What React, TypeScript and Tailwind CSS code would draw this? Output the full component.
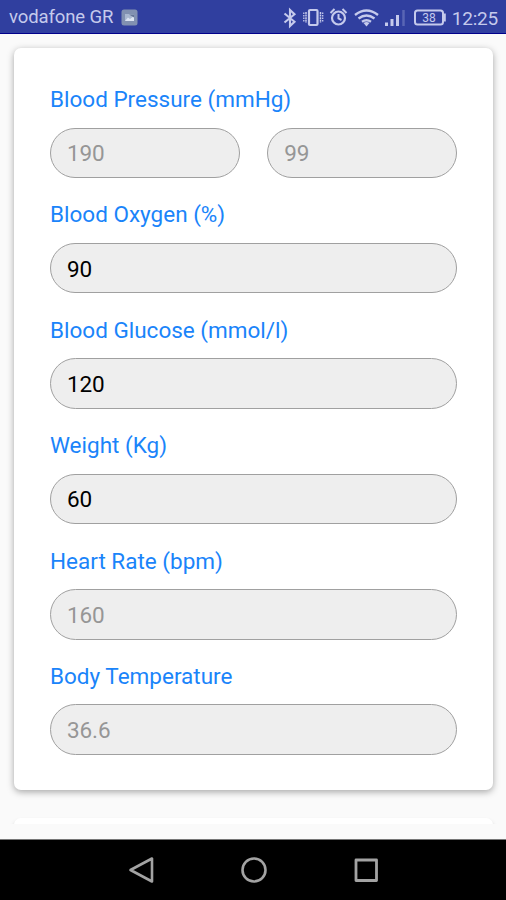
import clsx from "clsx";

type Field = {
    label: string;
    values: string[];
    disabled?: boolean;
};

const fields: Field[] = [
    { label: "Blood Pressure (mmHg)", values: ["190", "99"], disabled: true },
    { label: "Blood Oxygen (%)", values: ["90"] },
    { label: "Blood Glucose (mmol/l)", values: ["120"] },
    { label: "Weight (Kg)", values: ["60"] },
    { label: "Heart Rate (bpm)", values: ["160"], disabled: true },
    { label: "Body Temperature", values: ["36.6"], disabled: true },
];

const StatusIcons = () => (
    <svg className="overflow-visible" width="160" height="24" viewBox="286 6 160 24" fill="none" stroke="#c5caec" strokeWidth="1.8">
        {/* Bluetooth */}
        <path d="M285.500 13.500l10 8.300-4.500 4.200v-16l4.500 4.200-10 8.300" strokeWidth="2.100" />
        {/* Vibrate */}
        <rect x="310" y="10" width="8.500" height="15" rx="1" strokeWidth="2.200" />
        <path d="M307 12v11M321.500 12v11" strokeWidth="1.500" strokeDasharray="2 .6" />
        <path d="M304.800 12.500v10M323.700 12.500v10" strokeWidth="1.300" strokeDasharray="1.500 1" />
        {/* Alarm */}
        <circle cx="339.500" cy="18" r="6.500" strokeWidth="2.200" />
        <path d="M339.500 14v4.500l3 1.500M331.500 13l4-4M347.500 13l-4-4" strokeWidth="2" />
        {/* Wifi */}
        <path d="M356 15q11.500-9 23 0M359.500 18.500q8-6 16 0M363 21.700q4.500-3 9 0" strokeWidth="2.400" />
        <path d="M364.500 23q3-2 6 0l-3 3.500z" fill="#c5caec" stroke="none" />
        {/* Signal */}
        <path d="M387.500 22.500v3.500M393 19v7M398.500 15v11" strokeWidth="3" />
        <path d="M404.500 10v16" stroke="#5966b4" strokeWidth="2.500" />
        {/* Battery */}
        <rect x="416" y="10.500" width="28" height="14" rx="2.500" strokeWidth="2" />
        <path d="M445.800 13.500v8" strokeWidth="2" />
        <text x="430" y="22" textAnchor="middle" fill="#c5caec" stroke="none" fontSize="12">38</text>
    </svg>
);

const StatusBar = () => (
    <header className="flex h-[34px] shrink-0 items-center border-b border-[#00008b] bg-[#303f9f] pt-0.5 pr-2 pl-[9px] text-[#c5caec]">
        <span className="text-[18.5px] leading-none tracking-[-0.1px]">vodafone GR</span>
        <svg className="ml-2" width="17" height="17" viewBox="0 0 17 17">
            <rect x="0.500" y="0.500" width="16" height="16" rx="2.500" fill="#8191b1" />
            <path d="M4 5h9v7H4z" fill="#a9b8d0" />
            <path d="M4 12l3-3.500 2 1.500 4-3v5z" fill="#dce5f3" />
            <path d="M8 5.500h5v3z" fill="#657698" />
        </svg>
        <div className="ml-auto flex items-center">
            <StatusIcons />
            <span className="ml-[7px] pt-px text-[19px] leading-none tracking-[-0.2px]">12:25</span>
        </div>
    </header>
);

const FieldGroup = ({ label, values, disabled }: Field) => (
    <div className="flex flex-col gap-[14.5px]">
        <label className="h-7 text-[22.5px] leading-7 whitespace-nowrap text-[#1a84fa]">{label}</label>
        <div className="flex gap-[27.5px]">
            {values.map((value) => (
                <input
                    key={value}
                    defaultValue={value}
                    disabled={disabled}
                    className={clsx(
                        "h-[50.500px] w-full min-w-0 flex-1 rounded-full border border-[#a0a0a0] bg-[#eeeeee] px-4 pt-px text-[22.5px] tracking-[-0.1px] outline-none",
                        disabled ? "text-[#969696]" : "text-black"
                    )}
                />
            ))}
        </div>
    </div>
);

const NavBar = () => (
    <nav className="flex h-[61px] shrink-0 items-center justify-center gap-[84.5px] border-t border-[#777] bg-black pb-px pl-px">
        <svg width="28" height="28" viewBox="0 0 28 28" fill="none" stroke="#a3a3a3" strokeWidth="2.600" strokeLinejoin="round">
            <path d="M25 2.500v23L3.500 14z" />
        </svg>
        <svg width="28" height="28" viewBox="0 0 28 28" fill="none" stroke="#a3a3a3" strokeWidth="2.600">
            <circle cx="14" cy="14" r="11.500" />
        </svg>
        <svg width="28" height="28" viewBox="0 0 28 28" fill="none" stroke="#a3a3a3" strokeWidth="2.800" strokeLinejoin="round">
            <rect x="4" y="4" width="20.500" height="20.500" />
        </svg>
    </nav>
);

const App = () => {
    return (
        <div className="flex h-[900px] w-[506px] flex-col overflow-hidden bg-[#fafafa] font-[Roboto,sans-serif]">
            <StatusBar />
            <main className="mb-[15px] min-h-0 flex-1 overflow-hidden px-3.5 pt-3.5">
                <section className="flex h-[742px] w-[479px] flex-col gap-[22.4px] rounded-[7px] bg-white px-9 pt-[37px] shadow-[0_2px_7px_rgba(0,0,0,0.34)]">
                    {fields.map((field) => (
                        <FieldGroup key={field.label} {...field} />
                    ))}
                </section>
                {/* Top edge of the following card */}
                <section className="mt-7 h-20 w-[479px] rounded-[7px] bg-white shadow-[0_4px_5px_rgba(0,0,0,0.25)]" />
            </main>
            <NavBar />
        </div>
    );
};

export default App;
